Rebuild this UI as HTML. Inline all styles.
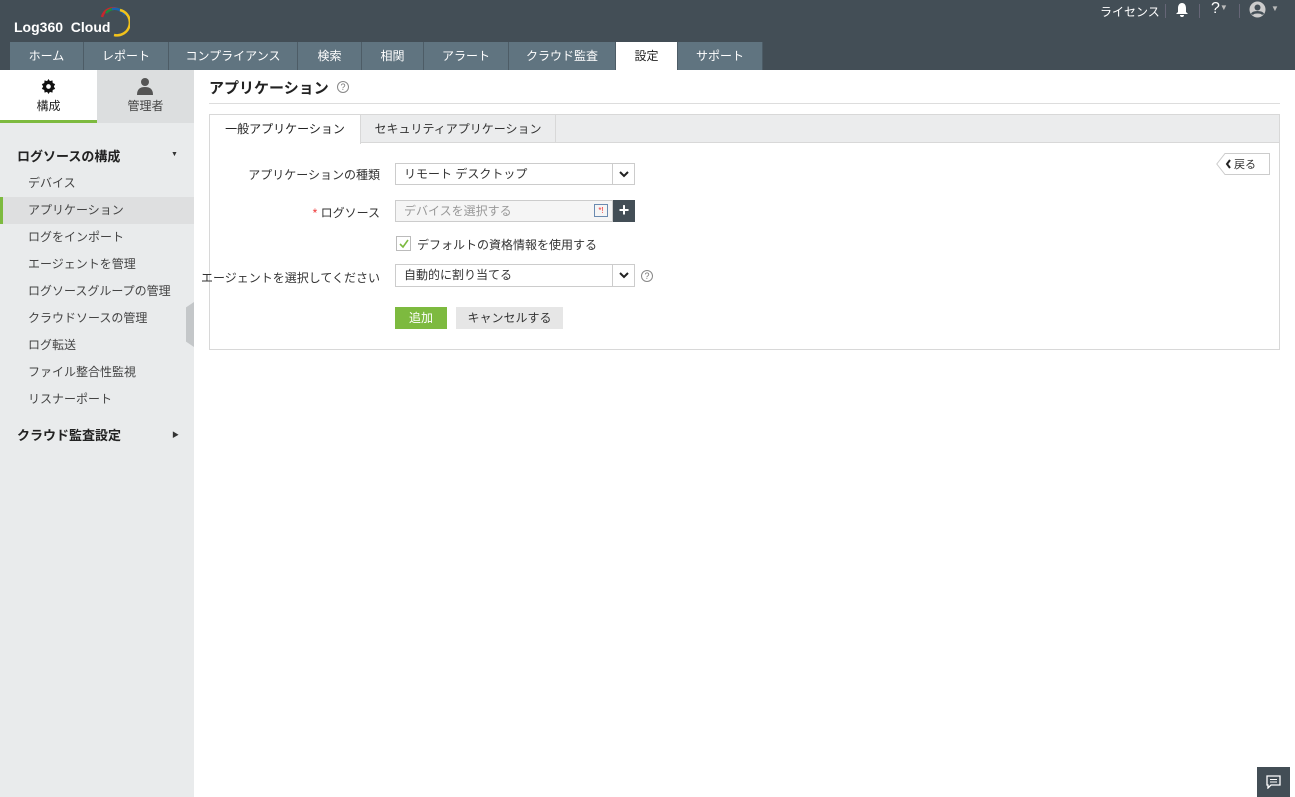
<!DOCTYPE html>
<html><head><meta charset="utf-8"><style>
*{box-sizing:border-box;margin:0;padding:0}
body{width:1295px;height:797px;overflow:hidden;font-family:"Liberation Sans","Noto Sans CJK JP",sans-serif;font-size:12px;color:#333;background:#fff;position:relative}
.hdr{position:absolute;left:0;top:0;width:1295px;height:70px;background:#434e56}
.logo{position:absolute;left:14px;top:19px;color:#fff;font-size:14px;font-weight:bold;white-space:nowrap}
.tabs{position:absolute;left:10px;top:42px;height:28px;display:flex}
.tabs div{height:28px;line-height:28px;background:#607480;color:#fff;font-size:12px;text-align:center;border-right:1px solid #4d5c66;white-space:nowrap}
.tabs div.on{background:#fff;color:#222}
.tr{position:absolute;top:0;right:0;width:220px;height:20px;color:#fff;font-size:12px}
.side{position:absolute;left:0;top:70px;width:194px;height:727px;background:#e9ebec}
.st{position:absolute;top:0;height:53px;text-align:center;font-size:12px}
.sec{position:absolute;left:17px;font-weight:bold;font-size:13px;color:#222}
.it{position:absolute;left:0;width:194px;height:27px;line-height:27px;padding-left:28px;font-size:12px;color:#444;white-space:nowrap}
.box{position:absolute;left:209px;top:114px;width:1071px;height:236px;border:1px solid #d8d8d8}
.lbl{position:absolute;font-size:12px;color:#333;text-align:right;white-space:nowrap}
.sel{position:absolute;height:22px;border:1px solid #ccc;background:#fff;font-size:12px;line-height:20px;padding-left:8px;white-space:nowrap}
.dd{position:absolute;right:0;top:0;width:22px;height:20px;border-left:1px solid #ccc}
.dd svg{position:absolute;left:6px;top:7px}
.q{position:absolute;width:12px;height:12px;border:1px solid #888;border-radius:50%;font-size:9px;text-align:center;line-height:10px;color:#777}
</style></head><body>
<div class="hdr">
 <div class="logo">Log360&nbsp; Cloud</div>
 <svg style="position:absolute;left:98px;top:5px" width="32" height="32" viewBox="0 0 32 32">
  <path d="M4 12 A12 12 0 0 1 20 4" stroke="#c9252d" stroke-width="2.5" fill="none"/>
  <path d="M8 8 A12 12 0 0 1 24 6" stroke="#1d8a3f" stroke-width="2.5" fill="none"/>
  <path d="M14 4 A12 12 0 0 1 27 10" stroke="#1b62b0" stroke-width="2.5" fill="none"/>
  <path d="M22 5 A12 12 0 0 1 16 30" stroke="#f2c21b" stroke-width="2.5" fill="none"/>
 </svg>
 <div class="tr">
  <span style="position:absolute;left:25px;top:3px;white-space:nowrap">ライセンス</span>
  <span style="position:absolute;left:90px;top:4px;width:1px;height:14px;background:#667"></span>
  <svg style="position:absolute;left:100px;top:2px" width="14" height="16" viewBox="0 0 14 16"><path d="M7 1C4 1 3 4 3 6v4L1 12h12l-2-2V6c0-2-1-5-4-5zM5 13a2 2 0 0 0 4 0z" fill="#fff"/></svg>
  <span style="position:absolute;left:124px;top:4px;width:1px;height:14px;background:#667"></span>
  <span style="position:absolute;left:136px;top:0px;font-size:16px;white-space:nowrap">?<span style="font-size:8px;color:#bbb;vertical-align:3px">▼</span></span>
  <span style="position:absolute;left:164px;top:4px;width:1px;height:14px;background:#667"></span>
  <svg style="position:absolute;left:174px;top:1px" width="17" height="17" viewBox="0 0 17 17"><circle cx="8.5" cy="8.5" r="8" fill="#ccc"/><circle cx="8.5" cy="6.5" r="3" fill="#434e56"/><path d="M3 13.5c1-3 10-3 11 0" stroke="#434e56" stroke-width="2.5" fill="none"/></svg>
  <span style="position:absolute;left:196px;top:4px;font-size:8px;color:#bbb">▼</span>
 </div>
 <div class="tabs">
  <div style="width:74px">ホーム</div><div style="width:85px">レポート</div><div style="width:129px">コンプライアンス</div><div style="width:64px">検索</div><div style="width:62px">相関</div><div style="width:85px">アラート</div><div style="width:107px">クラウド監査</div><div class="on" style="width:62px">設定</div><div style="width:85px">サポート</div>
 </div>
</div>
<div class="side">
 <div class="st" style="left:0;width:97px;background:#fff;border-bottom:3px solid #7dba3f">
  <svg style="position:absolute;left:41px;top:9px" width="15" height="15" viewBox="0 0 16 16"><path d="M8 0l1.5 2.3 2.7-.8.3 2.8 2.6 1.2-1.4 2.5 1.4 2.5-2.6 1.2-.3 2.8-2.7-.8L8 16l-1.5-2.3-2.7.8-.3-2.8L.9 10.5 2.3 8 .9 5.5l2.6-1.2.3-2.8 2.7.8z" fill="#111"/><circle cx="8" cy="8" r="2.5" fill="#fff"/></svg>
  <div style="position:absolute;top:27px;width:97px;color:#222">構成</div>
 </div>
 <div class="st" style="left:97px;width:97px;background:#dcdedf">
  <svg style="position:absolute;left:40px;top:7px" width="16" height="18" viewBox="0 0 16 18"><circle cx="8" cy="5" r="4" fill="#555"/><path d="M0 18c0-6 3-8 8-8s8 2 8 8z" fill="#555"/></svg>
  <div style="position:absolute;top:27px;width:97px;color:#444">管理者</div>
 </div>
 <div class="sec" style="top:76px">ログソースの構成</div><span style="position:absolute;left:171px;top:81px;font-size:7px">▼</span>
 <div class="it" style="top:100px">デバイス</div>
 <div class="it" style="top:127px;background:#dedfe0;border-left:3px solid #7dba3f;padding-left:25px">アプリケーション</div>
 <div class="it" style="top:154px">ログをインポート</div>
 <div class="it" style="top:181px">エージェントを管理</div>
 <div class="it" style="top:208px">ログソースグループの管理</div>
 <div class="it" style="top:235px">クラウドソースの管理</div>
 <div class="it" style="top:262px">ログ転送</div>
 <div class="it" style="top:289px">ファイル整合性監視</div>
 <div class="it" style="top:316px">リスナーポート</div>
 <div class="sec" style="top:355px">クラウド監査設定</div><span style="position:absolute;left:172px;top:360px;font-size:7px">▶</span>
 <div style="position:absolute;left:186px;top:232px;width:8px;height:45px;background:#c4c7c9;clip-path:polygon(100% 0,100% 100%,0 88%,0 12%)"></div>
</div>
<div style="position:absolute;left:209px;top:77px;font-size:15px;font-weight:bold;color:#222;white-space:nowrap">アプリケーション</div>
<div class="q" style="left:337px;top:81px">?</div>
<div style="position:absolute;left:209px;top:103px;width:1071px;height:1px;background:#ddd"></div>
<div class="box">
 <div style="position:absolute;left:0;top:0;width:1069px;height:28px;background:#ebeced;border-bottom:1px solid #d8d8d8"></div>
 <div style="position:absolute;left:0;top:0;width:151px;height:29px;background:#fff;border-right:1px solid #d8d8d8;text-align:center;line-height:28px;color:#222">一般アプリケーション</div>
 <div style="position:absolute;left:151px;top:0;width:195px;height:28px;border-right:1px solid #d8d8d8;text-align:center;line-height:28px;color:#333">セキュリティアプリケーション</div>
 <svg style="position:absolute;left:1006px;top:38px" width="54" height="22" viewBox="0 0 54 22"><path d="M9 .5H53.5V21.5H9L.8 11z" fill="#fff" stroke="#ccc"/><path d="M14 7l-3 4 3 4" stroke="#222" stroke-width="2" fill="none"/></svg>
 <span style="position:absolute;left:1024px;top:41px;font-size:11px">戻る</span>
</div>
<div class="lbl" style="left:200px;width:180px;top:166px">アプリケーションの種類</div>
<div class="sel" style="left:395px;top:163px;width:240px">リモート デスクトップ<div class="dd"><svg width="10" height="7" viewBox="0 0 10 7"><path d="M1 1l4 4 4-4" stroke="#222" stroke-width="2" fill="none"/></svg></div></div>
<div class="lbl" style="left:200px;width:180px;top:204px"><span style="color:#e33">*</span> ログソース</div>
<div class="sel" style="left:395px;top:200px;width:218px;background:#f5f5f5;color:#999">デバイスを選択する</div>
<div style="position:absolute;left:594px;top:204px;width:14px;height:13px;border:1px solid #6a8ab0;font-size:8px;color:#e33;text-align:center;line-height:11px">*!</div>
<div style="position:absolute;left:613px;top:200px;width:22px;height:22px;background:#434e56;color:#fff;font-size:18px;font-weight:bold;text-align:center;line-height:21px">+</div>
<div style="position:absolute;left:396px;top:236px;width:15px;height:15px;border:1px solid #bbb;background:#fff"><svg style="position:absolute;left:1px;top:1px" width="12" height="12" viewBox="0 0 12 12"><path d="M2 6l3 3 5-7" stroke="#7dba3f" stroke-width="1.6" fill="none"/></svg></div>
<div style="position:absolute;left:417px;top:236px;white-space:nowrap">デフォルトの資格情報を使用する</div>
<div class="lbl" style="left:200px;width:180px;top:269px">エージェントを選択してください</div>
<div class="sel" style="left:395px;top:264px;width:240px;height:23px">自動的に割り当てる<div class="dd" style="height:21px"><svg width="10" height="7" viewBox="0 0 10 7"><path d="M1 1l4 4 4-4" stroke="#222" stroke-width="2" fill="none"/></svg></div></div>
<div class="q" style="left:641px;top:270px">?</div>
<div style="position:absolute;left:395px;top:307px;width:52px;height:22px;background:#7dba3f;color:#fff;text-align:center;line-height:22px">追加</div>
<div style="position:absolute;left:456px;top:307px;width:107px;height:22px;background:#e6e6e6;color:#333;text-align:center;line-height:22px">キャンセルする</div>
<div style="position:absolute;left:1257px;top:767px;width:33px;height:30px;background:#434e56">
 <svg style="position:absolute;left:9px;top:8px" width="15" height="14" viewBox="0 0 15 14"><path d="M1 1h13v9H5l-3 3v-3H1z" fill="none" stroke="#fff" stroke-width="1.3"/><path d="M4 4.5h7M4 7h7" stroke="#fff"/></svg>
</div>
</body></html>
